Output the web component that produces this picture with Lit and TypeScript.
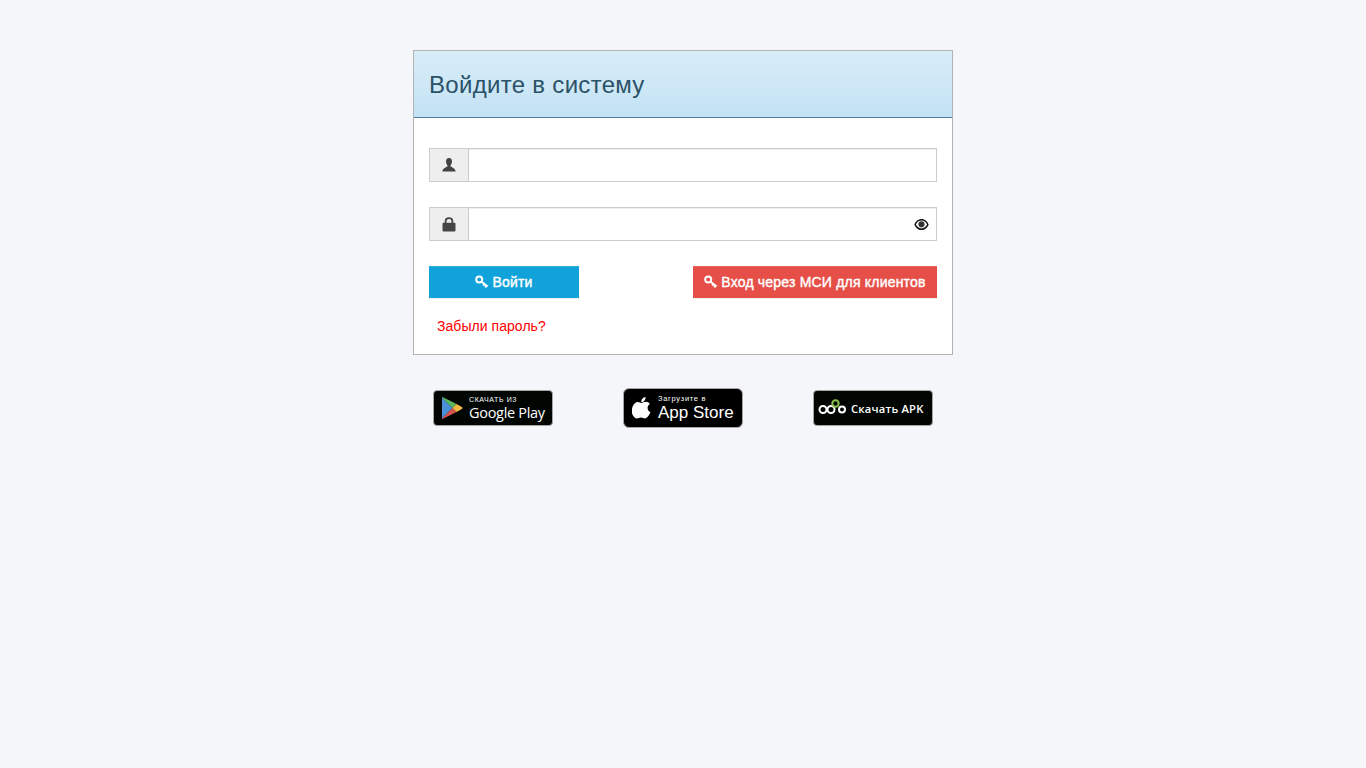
import { LitElement, html, css, svg } from "lit";
import { customElement } from "lit/decorators.js";

const keyIcon = svg`<svg class="key" viewBox="0 0 14 14" width="14" height="14"><circle cx="4.200" cy="4.400" r="3" fill="none" stroke="#fff" stroke-width="2"/><path d="M6.300 6.400 L12.600 11.600 M9.500 9 L8.200 10.700 M11.600 10.700 L10.200 12.400" stroke="#fff" stroke-width="2" fill="none"/></svg>`;

@customElement("app-root")
export class AppRoot extends LitElement {
  static styles = css`
    :host { display: block; min-height: 768px; background: #f5f6fa; font-family: "Liberation Sans", Arial, sans-serif; font-size: 14px; color: #333; }
    .wrap { width: 540px; margin: 0 auto; padding-top: 50px; }
    .card { background: #fff; border: 1px solid #b3b3b3; box-sizing: border-box; height: 305px; }
    .head { height: 67px; box-sizing: border-box; padding: 2px 0 0 15px; display: flex; align-items: center; background: linear-gradient(#d9edf8, #c3e2f4); border-bottom: 1px solid #4f7d9d; }
    h1 { margin: 0; font-size: 24px; font-weight: 400; color: #2b5168; line-height: 26px; letter-spacing: .3px; }
    .body { padding: 30px 15px 0; }
    .group { display: flex; height: 34px; margin-bottom: 25px; }
    .addon { width: 40px; box-sizing: border-box; background: #eee; border: 1px solid #ccc; display: flex; align-items: center; justify-content: center; }
    .field { flex: 1; box-sizing: border-box; border: 1px solid #ccc; border-left: 0; background: #fff; box-shadow: inset 0 1px 1px rgba(0,0,0,.075); display: flex; align-items: center; justify-content: flex-end; padding-right: 7px; }
    .actions { display: flex; justify-content: space-between; }
    .btn { height: 32px; box-sizing: border-box; display: flex; align-items: center; justify-content: center; gap: 3px; color: #fff; font-size: 14px; font-weight: 400; -webkit-text-stroke: 0.4px #fff; white-space: nowrap; letter-spacing: .2px; box-shadow: inset 0 1px 0 rgba(255,255,255,.12), 0 1px 0 rgba(0,0,0,.05); }
    .blue { width: 150px; background: #12a2da; }
    .red { width: 244px; background: #e64f47; }
    .link { display: block; margin: 19px 0 0 8px; color: #f00; line-height: 18px; font-size: 14px; letter-spacing: .05px; }
    .stores { display: flex; justify-content: space-between; padding: 0 20px; margin-top: 33px; align-items: center; height: 40px; }
    .badge { width: 120px; height: 36px; box-sizing: border-box; background: #010603; border: 1px solid #a6a6a6; border-radius: 4px; color: #fff; display: flex; align-items: center; font-family: "Liberation Sans", sans-serif; }
    .tall { height: 40px; background: #000; border-radius: 6px; }
    .col { display: flex; flex-direction: column; }
    .gp { padding-left: 7px; gap: 6px; }
    .small { font-size: 7px; line-height: 8px; letter-spacing: .6px; }
    .small2 { font-size: 7.500px; line-height: 9px; letter-spacing: .7px; }
    .gpn { font-family: "Open Sans", sans-serif; font-size: 14.500px; line-height: 17px; letter-spacing: -.3px; }
    .as { padding-left: 8px; gap: 6px; }
    .asn { font-size: 17px; line-height: 19px; }
    .apk { padding-left: 4px; gap: 5px; }
    .apkt { font-family: "Open Sans", sans-serif; font-size: 11.200px; font-weight: 600; letter-spacing: .2px; }
  `;

  render() {
    return html`<div class="wrap">
      <div class="card">
        <div class="head"><h1>Войдите в систему</h1></div>
        <div class="body">
          <div class="group">
            <div class="addon"><svg width="14" height="14" viewBox="0 0 14 14"><path fill="#444" d="M7 0C5 0 4 1.400 4 3.300c0 1.700.6 3 1.400 3.900v1.300C3.500 9.500.8 10.300.3 13.500h13.400c-.5-3.200-3.200-4-5.100-5V7.200C9.400 6.300 10 5 10 3.300 10 1.400 9 0 7 0z"/></svg></div>
            <div class="field"></div>
          </div>
          <div class="group">
            <div class="addon"><svg width="14" height="15" viewBox="0 0 14 15"><path fill="none" stroke="#444" stroke-width="1.800" d="M3.600 6.500V4.400C3.600 2.400 5 1.200 7 1.200s3.400 1.200 3.400 3.200v2.100"/><rect x=".5" y="5.800" width="13" height="8.700" rx="1" fill="#444"/></svg></div>
            <div class="field"><svg width="15" height="13" viewBox="0 0 16 14"><path fill="#111" fill-rule="evenodd" d="M8 1C4.500 1 1.600 3.600.3 7c1.300 3.400 4.200 6 7.700 6s6.400-2.600 7.700-6C14.400 3.600 11.500 1 8 1zM8 2.800c2.600 0 4.900 1.700 6 4.200-1.100 2.500-3.400 4.200-6 4.200S3.100 9.500 2 7c1.100-2.500 3.400-4.200 6-4.200z"/><circle cx="8" cy="6.800" r="3.300" fill="#333"/></svg></div>
          </div>
          <div class="actions">
            <div class="btn blue">${keyIcon}<span>Войти</span></div>
            <div class="btn red">${keyIcon}<span>Вход через МСИ для клиентов</span></div>
          </div>
          <span class="link">Забыли пароль?</span>
        </div>
      </div>
      <div class="stores">
        <div class="badge gp">
          <svg width="22" height="24" viewBox="0 0 22 24">
            <path fill="#4a90d9" d="M1 1.500V22.500L11.500 12z"/>
            <path fill="#5cb85c" d="M1 1.500 L1.500 1 L15.500 8 L11.500 12z"/>
            <path fill="#d9534f" d="M1 22.500 L1.500 23 L15.500 16 L11.500 12z"/>
            <path fill="#f0b840" d="M15.500 8 L21 11 Q22 12 21 13 L15.500 16 L11.500 12z"/>
          </svg>
          <div class="col"><span class="small">СКАЧАТЬ ИЗ</span><span class="gpn">Google Play</span></div>
        </div>
        <div class="badge tall as">
          <svg width="20" height="24" viewBox="0 0 20 24"><path fill="#fff" d="M14 5.800c1.400 0 2.900.8 3.900 2.200-3.400 1.900-2.900 6.800.6 8.100-.5 1.200-.8 1.800-1.500 2.900-1 1.500-2.400 3.400-4.100 3.400-1.500 0-1.900-1-4-1-2 0-2.500 1-4 1-1.700 0-3-1.700-4-3.200C-1.900 15 .6 7.200 5.300 6c1.600-.4 3 .9 4 .9 1 0 2.600-1.100 4.700-1.100zM13.600 1c.1 1.300-.3 2.500-1.100 3.400-.8 1-2 1.700-3.200 1.600-.2-1.200.4-2.500 1.100-3.300C11.100 1.800 12.500 1.100 13.600 1z"/></svg>
          <div class="col"><span class="small2">Загрузите в</span><span class="asn">App Store</span></div>
        </div>
        <div class="badge apk">
          <svg width="28" height="20" viewBox="0 0 28 20" fill="none" stroke-width="2"><circle cx="5" cy="11.500" r="3.500" stroke="#fff"/><circle cx="13" cy="11.500" r="3.500" stroke="#fff"/><circle cx="24" cy="11.500" r="3" stroke="#fff"/><circle cx="17.500" cy="5.500" r="3.200" stroke="#8cc04b"/></svg>
          <span class="apkt">Скачать APK</span>
        </div>
      </div>
    </div>`;
  }
}
